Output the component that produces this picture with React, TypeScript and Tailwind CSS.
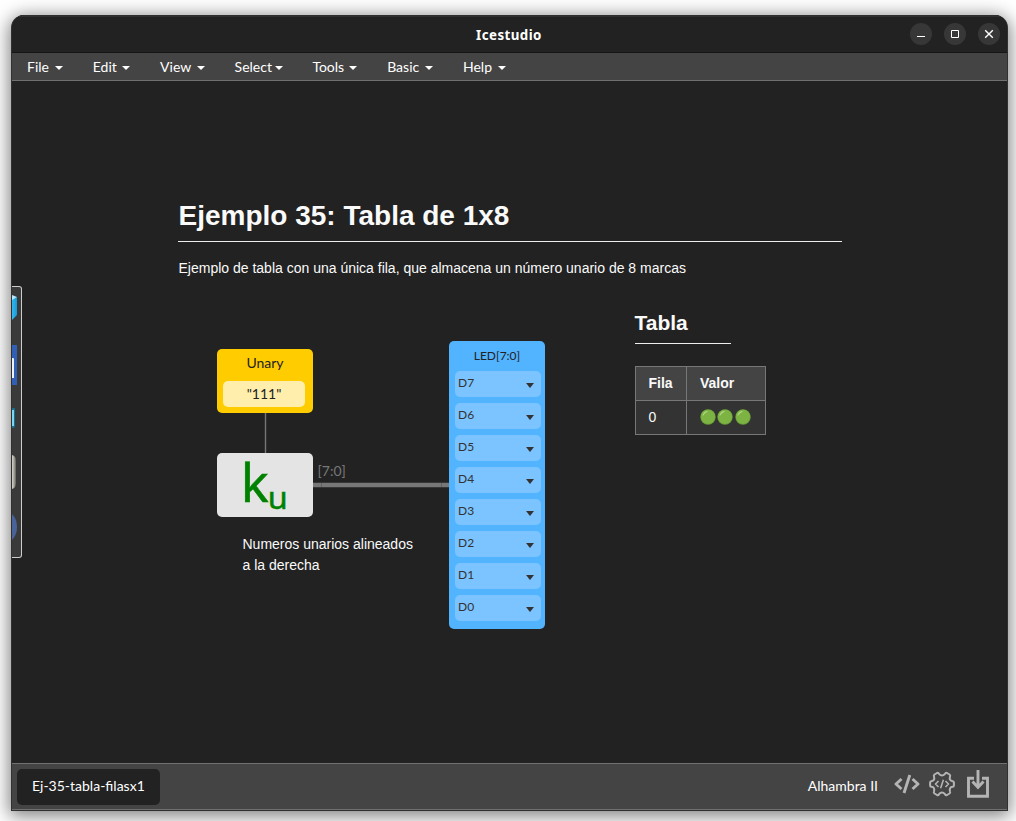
import React from "react";

const menus = [
  { label: "File", size: "w-9" },
  { label: "Edit", size: "w-[37.5px]" },
  { label: "View", size: "w-[44.7px]" },
  { label: "Select", size: "w-12" },
  { label: "Tools", size: "w-[45px]" },
  { label: "Basic", size: "w-[46px]" },
  { label: "Help", size: "w-[43px]" },
];

const pins = ["D7", "D6", "D5", "D4", "D3", "D2", "D1", "D0"];

function Caret({ className }: { className: string }) {
  return (
    <svg viewBox="0 0 8 4" preserveAspectRatio="none" className={className} fill="currentColor">
      <path d="M0 0h8L4 4z" />
    </svg>
  );
}

function TitleBar() {
  return (
    <header className="grid h-[38px] shrink-0 grid-cols-3 items-center border-t-2 border-b border-t-[#303030] border-b-[#151515] bg-[#222]">
      <span />
      <h1 className="-ml-px text-center font-['Noto_Sans',sans-serif] text-[13.3px] leading-5 font-bold tracking-[0.45px] text-white">
        Icestudio
      </h1>
      <div className="flex justify-end gap-3 pr-[7px] pb-px">
        <button className="size-[22px] rounded-full bg-[#373737]" aria-label="Minimize">
          <svg viewBox="0 0 22 22" className="size-[22px]" fill="none" stroke="#fff">
            <path d="M7 13.5h8" />
          </svg>
        </button>
        <button className="size-[22px] rounded-full bg-[#373737]" aria-label="Maximize">
          <svg viewBox="0 0 22 22" className="size-[22px]" fill="none" stroke="#fff">
            <path d="M7.5 7.5h7v7h-7z" />
          </svg>
        </button>
        <button className="size-[22px] rounded-full bg-[#373737]" aria-label="Close">
          <svg viewBox="0 0 22 22" className="size-[22px]" fill="none" stroke="#fff" strokeWidth="1.4">
            <path d="M7.2 7.2l7.6 7.6M14.8 7.2l-7.6 7.6" />
          </svg>
        </button>
      </div>
    </header>
  );
}

function MenuBar() {
  return (
    <nav className="flex h-7 shrink-0 items-center gap-[29.8px] border-b border-[#707070] bg-[#444] pl-[15px] text-sm text-white">
      {menus.map((m) => (
        <div key={m.label} className={`flex items-center justify-between ${m.size}`}>
          <span>{m.label}</span>
          <Caret className="mt-0.5 h-1 w-2 shrink-0" />
        </div>
      ))}
    </nav>
  );
}

function SidePanel() {
  return (
    <aside className="absolute top-[205px] left-0 h-[272px] w-[10px] overflow-hidden rounded-r-[3px] border border-l-0 border-[#ccc] bg-[#3a3a3a]">
      <svg viewBox="0 0 9 270" className="h-[270px] w-[9px]">
        <defs>
          <linearGradient id="cube" x1="0" x2="1">
            <stop offset="0" stopColor="#37b7ee" />
            <stop offset="1" stopColor="#149bd8" />
          </linearGradient>
          <linearGradient id="metal" x1="0" x2="1">
            <stop offset="0" stopColor="#d4d4cc" />
            <stop offset="0.5" stopColor="#a4a49b" />
            <stop offset="1" stopColor="#62625c" />
          </linearGradient>
        </defs>
        <path d="M0 12l5-2v18L0 33z" fill="url(#cube)" />
        <path d="M0 8l5 2-5 3z" fill="#b3e8ff" />
        <path d="M0 58h5v40H0z" fill="#315fb5" />
        <path d="M0 71h1q1 0 1 1v19H0z" fill="#eef2fa" />
        <path d="M0 121h2q1 0 1 1v17q0 2-2 2H0z" fill="#176f8b" />
        <path d="M0 123h2v16H0z" fill="#79d8ef" />
        <path d="M0 168q4 1 4 6v22q0 5-4 6z" fill="url(#metal)" />
        <path d="M0 227q5 5 5 13t-5 13z" fill="#49639a" />
      </svg>
    </aside>
  );
}

function GreenDot() {
  return (
    <svg viewBox="0 0 16 16" className="size-4">
      <circle cx="8" cy="8" r="7.7" fill="#689f38" />
      <circle cx="8" cy="7.8" r="7.1" fill="#7cb342" />
      <path d="M2.5 6.5Q3.3 3 6.8 2.1q1.3-.2.8.6Q4.3 4.1 3.3 6.6q-.6.8-.8-.1z" fill="#aed581" />
    </svg>
  );
}

function Canvas() {
  return (
    <main className="relative min-h-0 flex-1 overflow-hidden bg-[#222]">
      <section className="absolute top-[118px] left-[166px] w-[664px] font-['Liberation_Sans',Arial,sans-serif] text-[#fafafa]">
        <h2 className="h-[43px] border-b border-[#eee] pl-[0.5px] text-[28px] leading-[34px] font-bold">
          Ejemplo 35: Tabla de 1x8
        </h2>
        <p className="mt-4 pl-[0.5px] text-sm leading-[21px]">
          Ejemplo de tabla con una única fila, que almacena un número unario de 8 marcas
        </p>
      </section>

      <svg viewBox="0 0 995 682" className="absolute inset-0 h-[682px] w-[995px]">
        <path d="M253.5 332v40" stroke="#777" strokeWidth="1.4" />
        <path d="M301 404h136" stroke="#777" strokeWidth="4.4" />
        <path d="M309.5 402v4M429.5 402v4" stroke="#555" strokeWidth="0.6" />
      </svg>

      <div className="absolute top-[268px] left-[205px] h-16 w-24 rounded-[5px] bg-[#fc0] px-1.5 text-center text-sm text-[#222]">
        <div className="h-8 pt-[5px] leading-[17px]">Unary</div>
        <div className="h-[26px] w-[82px] rounded-[5px] bg-[#ffeeac] leading-[25px]">"111"</div>
      </div>

      <div className="absolute top-[372px] left-[205px] h-16 w-24 rounded-[5px] bg-[#e4e4e4]">
        <svg viewBox="0 0 96 64" className="h-16 w-24 overflow-visible" fill="#008200" stroke="#008200" strokeWidth="0.5" fontFamily="'Noto Sans', sans-serif">
          <text x="23.700" y="49" fontSize="53" textLength="28" lengthAdjust="spacingAndGlyphs">k</text>
          <text x="50.700" y="55.500" fontSize="31" textLength="20" lengthAdjust="spacingAndGlyphs">u</text>
        </svg>
      </div>

      <span className="absolute top-[380px] left-[305.5px] text-sm leading-5 text-[#777]">[7:0]</span>

      <p className="absolute top-[453px] left-[230.5px] w-[180px] font-['Liberation_Sans',Arial,sans-serif] text-sm leading-[21px] text-[#fafafa]">
        Numeros unarios alineados a la derecha
      </p>

      <div className="absolute top-[260px] left-[437px] flex h-72 w-24 flex-col rounded-[5px] bg-[#52b3ff] pr-1 pl-1.5 text-[12px] text-[#333]">
        <div className="h-[30px] pt-1.5 pr-[2px] text-center leading-[17px] text-[#222]">LED[7:0]</div>
        <div className="flex flex-col gap-1.5">
          {pins.map((pin) => (
            <div key={pin} className="flex h-[26px] items-center justify-between rounded-[5px] bg-[#7bc4ff] pr-[7px] pl-[3px]">
              <span className="mb-0.5 text-[12px] leading-4">{pin}</span>
              <Caret className="mt-[3px] h-[5px] w-2" />
            </div>
          ))}
        </div>
      </div>

      <section className="absolute top-[231px] left-[623px] font-['Liberation_Sans',Arial,sans-serif] text-sm text-[#fafafa]">
        <h3 className="mb-[22px] h-8 w-24 border-b border-[#eee] text-[21px] leading-[21px] font-bold">
          <span className="-ml-[0.5px]">Tabla</span>
        </h3>
        <table className="h-[69px] w-[131px] table-fixed border-collapse bg-[#333] text-left">
          <thead>
            <tr className="h-[34px] bg-[#444]">
              <th className="w-[51px] border border-[#777] pb-0.5 pl-[12.5px]">Fila</th>
              <th className="border border-[#777] pb-0.5 pl-[13px]">Valor</th>
            </tr>
          </thead>
          <tbody>
            <tr className="h-[34px]">
              <td className="border border-[#777] pb-0.5 pl-[12.5px]">0</td>
              <td className="border border-[#777] pb-0.5 pl-[13px]">
                <div className="flex gap-[1.4px]">
                  <GreenDot />
                  <GreenDot />
                  <GreenDot />
                </div>
              </td>
            </tr>
          </tbody>
        </table>
      </section>
      <SidePanel />
    </main>
  );
}

function StatusBar() {
  return (
    <footer className="flex h-[47px] shrink-0 items-center justify-between border-y border-[#707070] bg-[#444] pl-[5px] text-sm text-white">
      <div className="flex h-9 w-[143px] items-center rounded-[5px] bg-[#222] pb-0.5 pl-[15px]">
        <span>Ej-35-tabla-filasx1</span>
      </div>
      <div className="flex items-center pr-[18px] pb-0.5">
        <span>Alhambra II</span>
        <svg viewBox="0 0 26 20" className="mb-1 ml-4 h-5 w-[26px]" fill="none" stroke="#b4b4b4" strokeWidth="2.9" strokeLinejoin="round">
          <path d="M7.500 5L2 10l5.500 5M18.500 5L24 10l-5.500 5M15.800 1L10 19" />
        </svg>
        <svg viewBox="0 0 26 26" className="mb-1 ml-[9px] size-[26px]" fill="none" stroke="#b4b4b4" strokeWidth="2" strokeLinejoin="round">
          <path d="M8 2Q9.300 1.400 10 2.800Q13 6.200 16 2.800Q16.700 1.400 18 2L20.500 3.500Q21.600 4.300 21 5.500Q19.800 9.800 23.700 10.200Q24.900 10.300 24.900 11.500V14.500Q24.900 15.700 23.700 15.800Q19.800 16.200 21 20.500Q21.600 21.700 20.500 22.500L18 24Q16.700 24.600 16 23.200Q13 19.800 10 23.200Q9.300 24.600 8 24L5.500 22.500Q4.400 21.700 5 20.500Q6.200 16.200 2.300 15.800Q1.100 15.700 1.100 14.500V11.500Q1.100 10.300 2.300 10.200Q6.200 9.800 5 5.500Q4.400 4.300 5.500 3.500z" />
          <path d="M9.500 10L6.500 13l3 3M16.500 10l3 3-3 3M14.400 8.800l-2.800 8.400" strokeWidth="1.600" />
        </svg>
        <svg viewBox="0 0 22 28" className="mb-1 ml-3 h-7 w-[22px]" fill="none" stroke="#b4b4b4" strokeWidth="2.900">
          <path d="M7 8.200H1.500v18h19v-18H15M11 0v17.500M5.500 11.500l5.500 5.800 5.500-5.800" />
        </svg>
      </div>
    </footer>
  );
}

export default function App() {
  return (
    <div className="h-[821px] w-[1016px] overflow-hidden bg-white pt-[15px] pl-[11px] font-['Lato',sans-serif]">
      <div className="flex h-[796px] w-[997px] flex-col overflow-hidden rounded-t-[13px] border-x border-b border-[#303030] bg-[#222] shadow-[0_3px_18px_2px_rgba(0,0,0,0.5)]">
        <TitleBar />
        <MenuBar />
        <Canvas />
        <StatusBar />
      </div>
    </div>
  );
}
